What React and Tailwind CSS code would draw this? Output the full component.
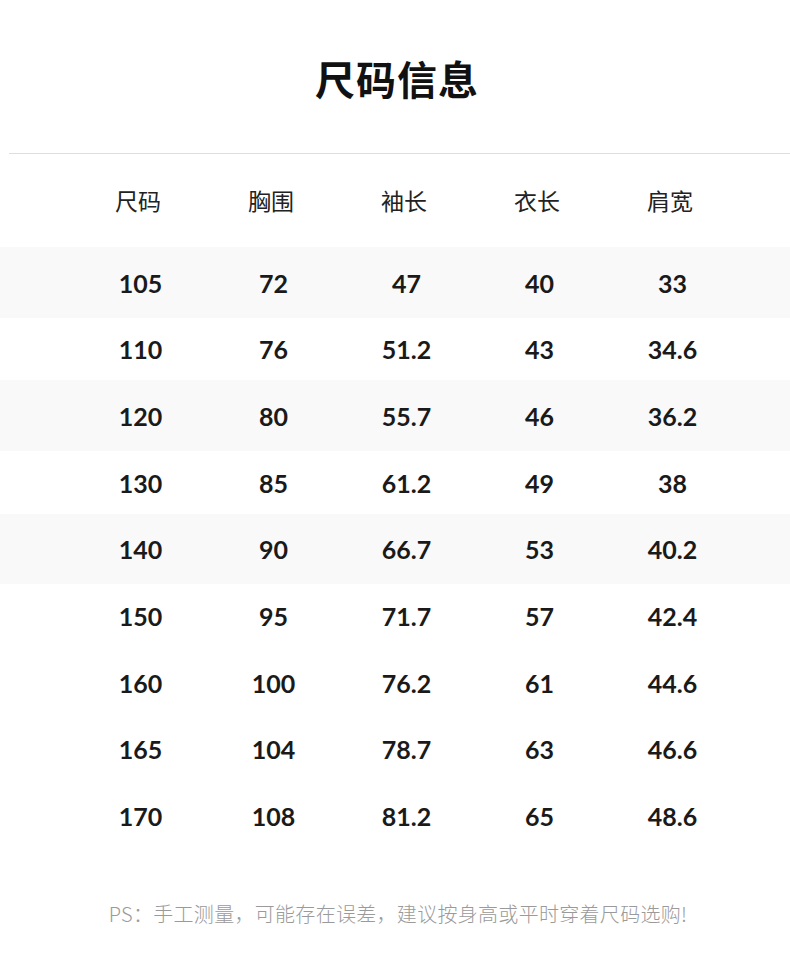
import React from "react";

const rows = [
  ["105", "72", "47", "40", "33"],
  ["110", "76", "51.2", "43", "34.6"],
  ["120", "80", "55.7", "46", "36.2"],
  ["130", "85", "61.2", "49", "38"],
  ["140", "90", "66.7", "53", "40.2"],
  ["150", "95", "71.7", "57", "42.4"],
  ["160", "100", "76.2", "61", "44.6"],
  ["165", "104", "78.7", "63", "46.6"],
  ["170", "108", "81.2", "65", "48.6"],
];

const headers = ["尺码", "胸围", "袖长", "衣长", "肩宽"];

export default function App() {
  return (
    <div className="w-[790px] h-[980px] bg-white font-['Noto_Sans_CJK_SC',sans-serif]">
      <div className="h-[153px] flex items-center justify-center pt-[3px] pl-[4px]">
        <h1 className="text-[40px] leading-none font-bold text-[#111] tracking-[1px]">尺码信息</h1>
      </div>
      <div className="ml-[9px] h-px bg-[#dedede]" />
      <div className="h-[95px] pl-[74px] grid grid-cols-[repeat(5,133px)] items-center pb-[2px]">
        {headers.map((h) => (
          <div key={h} className="text-center text-[23px] text-[#222] pr-[5px]">{h}</div>
        ))}
      </div>
      <div>
        {rows.map((r, i) => (
          <div
            key={i}
            className={
              i % 2 === 0 && i < 5
                ? "h-[70.7px] my-[-2px] bg-[#f9f9f9] pl-[74px] grid grid-cols-[repeat(5,133px)] items-center"
                : "h-[66.7px] relative pl-[74px] grid grid-cols-[repeat(5,133px)] items-center"
            }
          >
            {r.map((c, j) => (
              <div key={j} className="text-center text-[25px] font-bold text-[#1a1a1a] font-['Lato',sans-serif] pt-[2px]">
                {c}
              </div>
            ))}
          </div>
        ))}
      </div>
      <div className="mt-[53px] pl-[6px] text-center text-[20px] leading-[24px] tracking-[0.3px] text-[#9a9a9a] font-light whitespace-nowrap">
        PS：手工测量，可能存在误差，建议按身高或平时穿着尺码选购!
      </div>
    </div>
  );
}
